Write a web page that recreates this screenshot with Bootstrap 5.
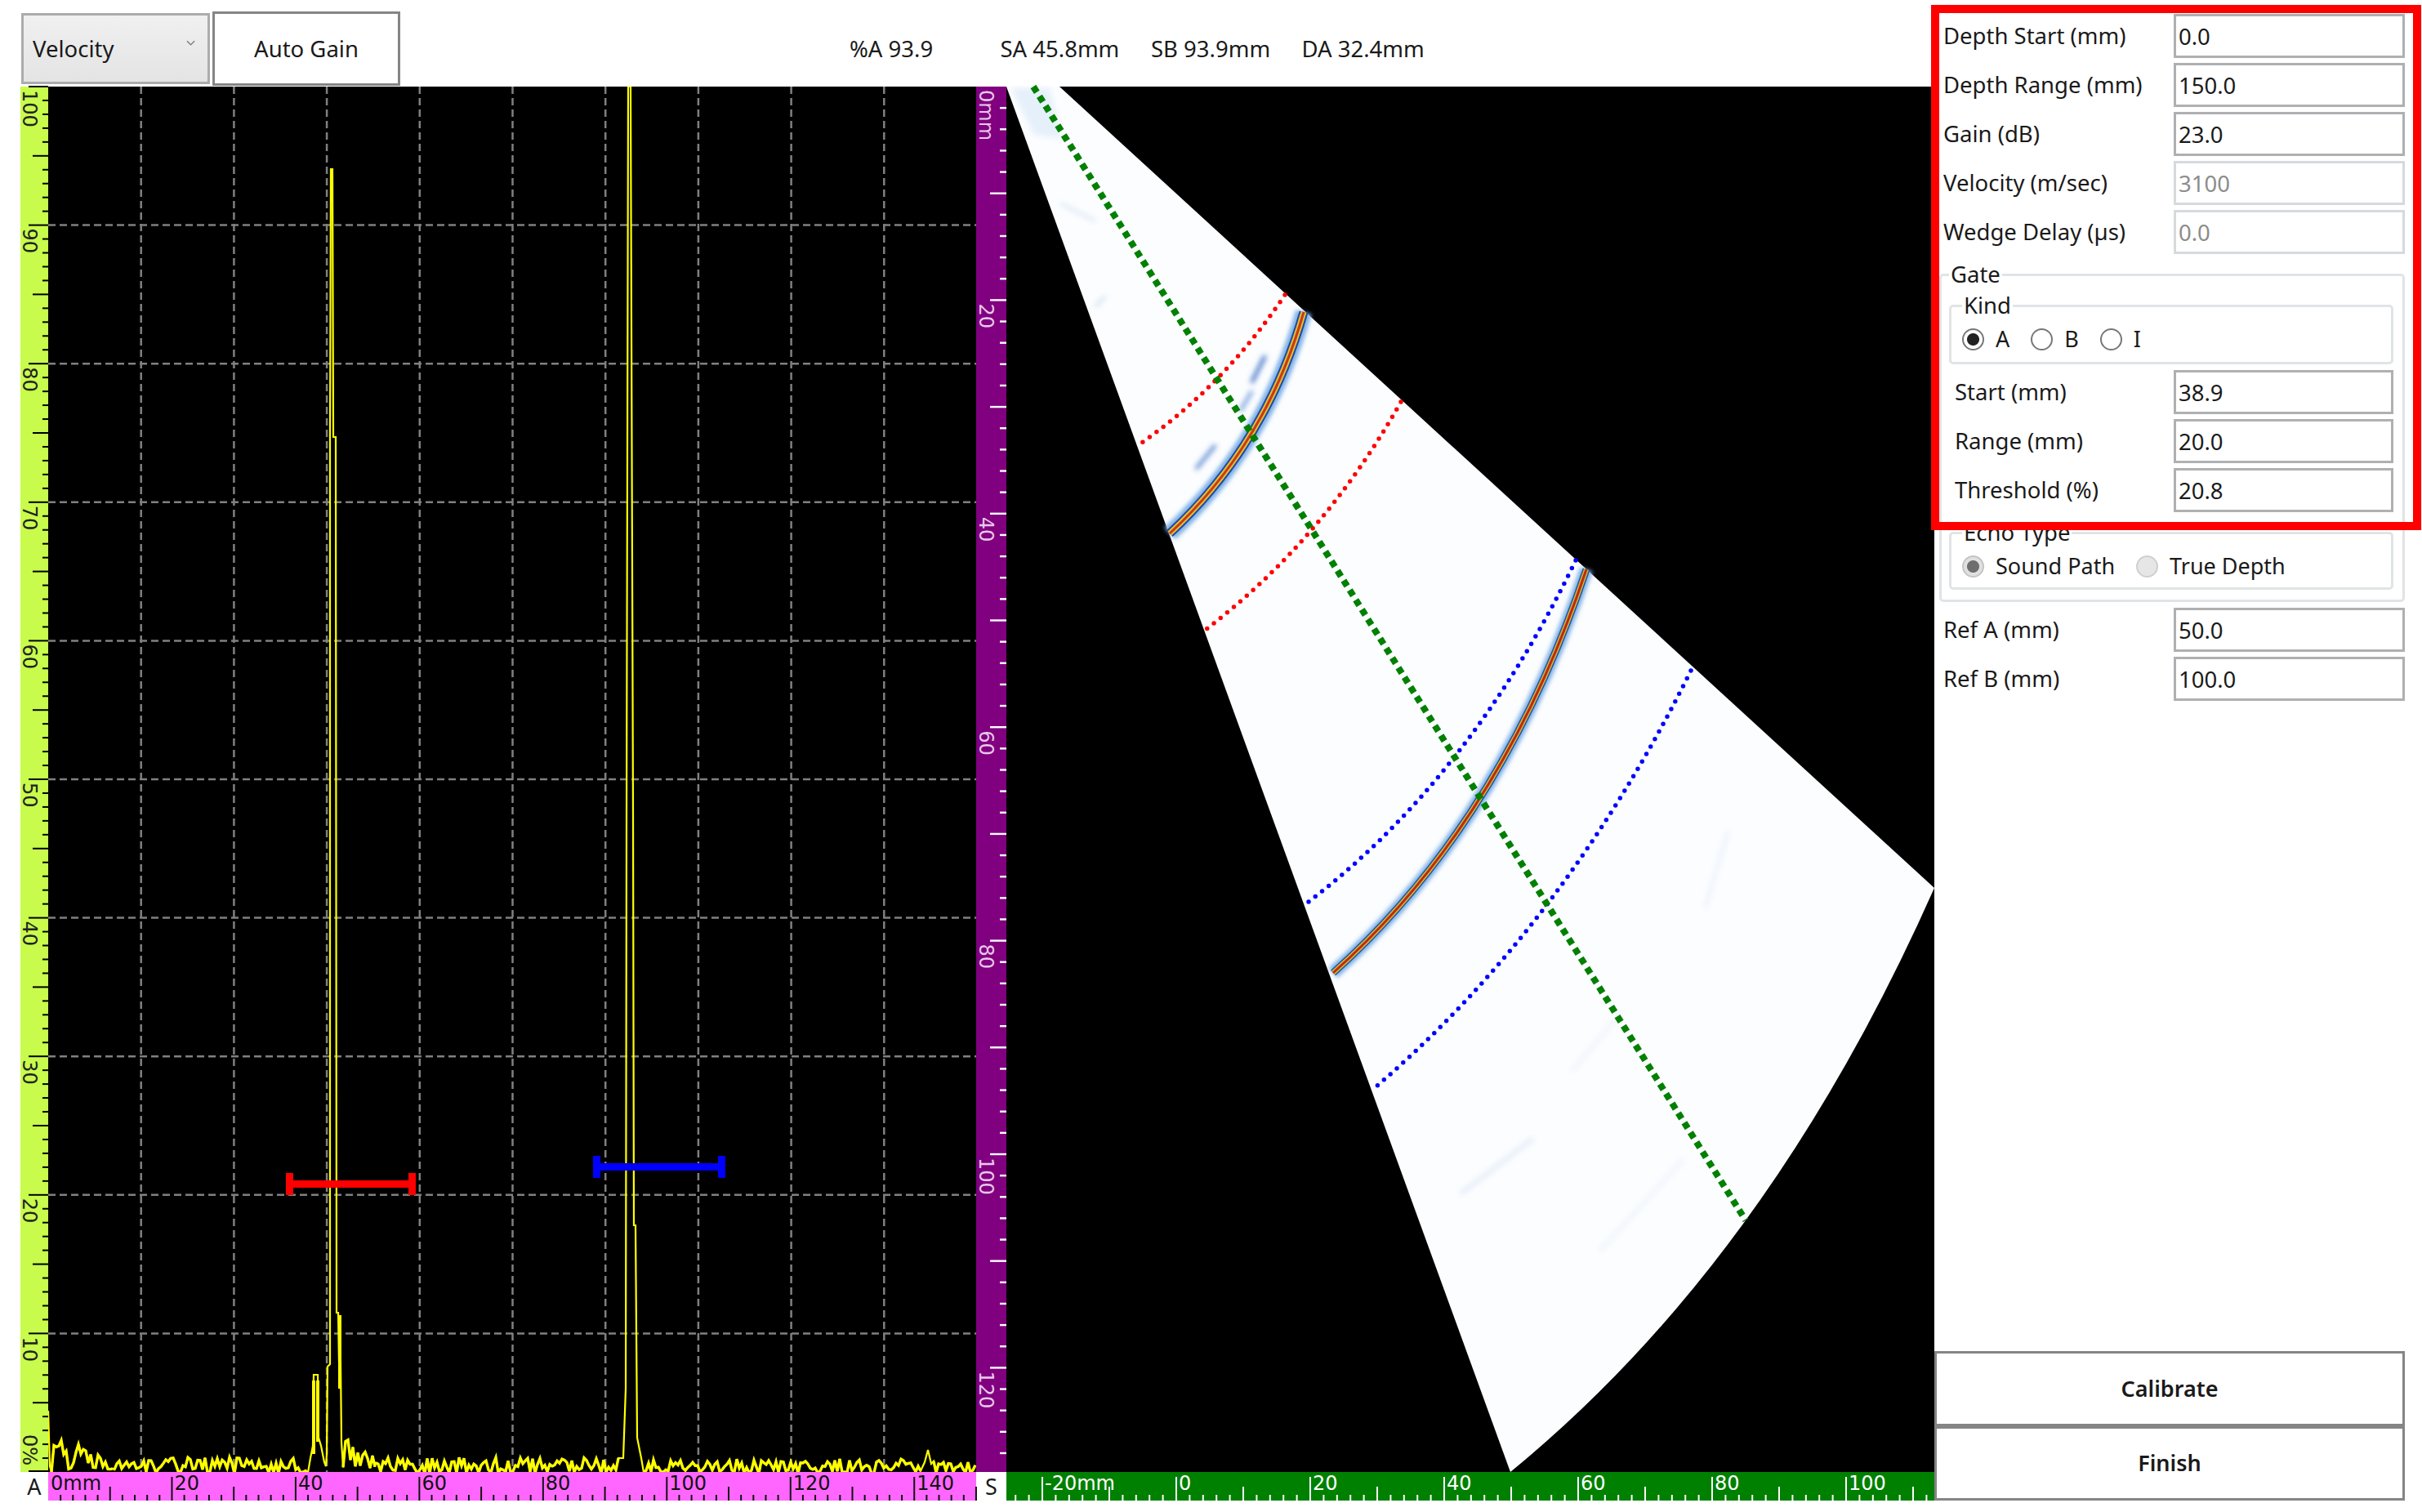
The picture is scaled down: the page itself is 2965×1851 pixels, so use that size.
<!DOCTYPE html>
<html lang="en">
<head>
    <meta charset="UTF-8">
    <title>Velocity Calibration</title>
    <link href="https://cdn.jsdelivr.net/npm/bootstrap@5.3.0/dist/css/bootstrap.min.css" rel="stylesheet">
    <style>
        body {
            background: #fff;
            color: #1a1a1a;
            font-family: "Noto Sans", "Liberation Sans", sans-serif;
            font-size: 27.5px;
            height: 1851px;
            overflow: hidden;
        }
        .app-left { width: 2368px; }
        .app-right {
            width: 597px;
            height: 1851px;
            padding: 17px 21px 14px 11px;
        }
        .top-row { height: 106px; padding: 13px 0 0 26px; }
        .mode-select {
            width: 231px;
            height: 87px;
            padding: 0 0 0 11px;
            font-size: 27.5px;
            color: #1a1a1a;
            border: 3px solid #acacac;
            border-radius: 0;
            background-color: #ececec;
            background-image: url("data:image/svg+xml,%3csvg xmlns='http://www.w3.org/2000/svg' viewBox='0 0 12 8'%3e%3cpath fill='none' stroke='%23808080' stroke-width='1.6' d='M1 1l5 5 5-5'/%3e%3c/svg%3e"), linear-gradient(#f0f0f0, #e4e4e4);
            background-repeat: no-repeat;
            background-position: right 15px top 30px, 0 0;
            background-size: 11px 8px, 100% 100%;
        }
        .plain-btn {
            background: #fff;
            border: 3px solid #858585;
            border-radius: 0;
            color: #1a1a1a;
            font-size: 27.5px;
            padding: 0;
        }
        .gain-btn { width: 230px; height: 91px; margin-left: 3px; }
        .readouts { margin-left: 550px; }
        .readout-item { width: 184.5px; white-space: nowrap; }
        .scope-grid {
            display: grid;
            grid-template-columns: 34px 1136px 37px 1136px;
            grid-template-rows: 1696px 35px;
            margin-left: 25px;
        }
        .scope-grid svg { display: block; overflow: visible; }
        .axis-letter {
            display: flex;
            align-items: center;
            justify-content: center;
            font-size: 27px;
            line-height: 1;
        }
        .axis-text { font-family: "DejaVu Sans", sans-serif; font-size: 24px; }
        .field-row { margin-bottom: 6px; }
        .field-label { width: 282px; flex-shrink: 0; white-space: nowrap; }
        .group-row .field-label { width: 275px; padding-left: 7px; }
        .field-input {
            height: 54px;
            border: 3px solid #aeb0b2;
            border-radius: 0;
            font-size: 27.5px;
            color: #1a1a1a;
            padding: 0 3px;
            min-height: 0;
        }
        .field-input:disabled {
            background: #fff;
            border-color: #d6dadd;
            color: #8c8c8c;
        }
        .group-box {
            border: 3px solid #e0e4e6;
            border-radius: 5px;
        }
        .group-title {
            font-size: 27.5px;
            line-height: 38px;
            margin: 0;
            padding: 0 2px;
        }
        .gate-box { margin: 6px 0 7px -5px; padding: 0 11px 12px 9px; }
        .kind-box { padding: 3px 13px 9px 13px; margin-bottom: 7px; }
        .echo-box { padding: 3px 13px 7px 13px; margin-top: 6px; }
        .radio-line { gap: 26px; height: 38px; font-size: 27px; }
        .radio-line label { white-space: nowrap; }
        .radio-item { gap: 14px; }
        .radio-dot.form-check-input {
            width: 27px;
            height: 27px;
            margin: 0;
            border: 2px solid #777;
            background-color: #fff;
            opacity: 1;
            box-shadow: none;
        }
        .radio-dot.form-check-input:checked[type=radio] {
            background-color: #fff;
            border-color: #777;
            background-image: radial-gradient(circle, #222 0 7px, #fff 8px);
        }
        .radio-dot.form-check-input:disabled { background-color: #e6e6e6; border-color: #cfcfcf; }
        .radio-dot.form-check-input:checked:disabled[type=radio] {
            border-color: #c4c4c4;
            background-image: radial-gradient(circle, #6e6e6e 0 7px, #e0e0e0 8px);
        }
        .action-btn {
            display: block;
            width: 576px;
            height: 92px;
            margin-left: -11px;
            font-size: 27px;
            font-weight: 600;
        }
        .action-btn + .action-btn { height: 91px; }
        .mark-box {
            position: absolute;
            left: 2364px;
            top: 6px;
            width: 600px;
            height: 643px;
            border: 10px solid #f00;
            pointer-events: none;
        }
    </style>
</head>
<body>

<div class="d-flex">
    <div class="app-left">
        <div class="top-row d-flex align-items-center position-relative">
            <select class="form-select mode-select"><option>Velocity</option></select>
            <button type="button" class="btn plain-btn gain-btn">Auto Gain</button>
            <div class="readouts d-flex">
                <span class="readout-item">%A 93.9</span>
                <span class="readout-item">SA 45.8mm</span>
                <span class="readout-item">SB 93.9mm</span>
                <span class="readout-item">DA 32.4mm</span>
            </div>
        </div>

        <div class="scope-grid">
            <svg id="ampRuler" width="34" height="1696" viewBox="25 106 34 1696"></svg>
            <svg id="ascan" width="1136" height="1696" viewBox="59 106 1136 1696"></svg>
            <svg id="depthRuler" width="37" height="1696" viewBox="1195 106 37 1696"></svg>
            <svg width="1136" height="1696" viewBox="1232 106 1136 1696">
                <defs>
                    <filter id="soft" x="-5%" y="-5%" width="110%" height="110%"><feGaussianBlur stdDeviation="0.7"/></filter>
                    <filter id="smear" x="-50%" y="-50%" width="200%" height="200%"><feGaussianBlur stdDeviation="3"/></filter>
                    <filter id="glow" x="-20%" y="-20%" width="140%" height="140%"><feGaussianBlur stdDeviation="2.5"/></filter>
                </defs>
                <rect x="1232" y="106" width="1136" height="1696" fill="#000"/>
                <g filter="url(#soft)">
                    <path d="M1232 106L1297 106L2368 1087Q2165.5 1543.5 1849 1802Z" fill="#fbfdff"/>
                    <!-- faint echoes -->
                    <g fill="none" stroke-linecap="round" filter="url(#smear)">
                        <path d="M1238 108L1285 108L1300 170L1266 165Z" fill="#e6f0fa" stroke="none"/>
                        <path d="M1340 270L1300 250" stroke="#e6eef8" stroke-width="5"/>
                        <path d="M1352 364L1342 374" stroke="#d5e2f1" stroke-width="4"/>
                        <path d="M1548 437L1533 467" stroke="#3d6fc4" stroke-width="4.5"/>
                        <path d="M1532 480L1519 502" stroke="#6d97d8" stroke-width="4"/>
                        <path d="M1487 546L1465 573" stroke="#4f7fcd" stroke-width="4"/>
                        <path d="M2115 1020L2088 1110" stroke="#eef3fa" stroke-width="5"/>
                        <path d="M1985 1240L1925 1310" stroke="#f0f4fa" stroke-width="5"/>
                        <path d="M1875 1395L1790 1460" stroke="#e9eff8" stroke-width="6"/>
                        <path d="M2060 1420L1960 1530" stroke="#f0f4fa" stroke-width="5"/>
                    </g>
                    <!-- strong echoes -->
                    <g fill="none">
                        <path d="M1596 382Q1550 543.7 1432 653" stroke="#7fb0e6" stroke-width="20" filter="url(#glow)"/>
                        <path d="M1596 382Q1550 543.7 1432 653" stroke="#1b49a6" stroke-width="11"/>
                        <path d="M1596 382Q1550 543.7 1432 653" stroke="#e5bf2c" stroke-width="7"/>
                        <path d="M1596 382Q1550 543.7 1432 653" stroke="#c8391f" stroke-width="3"/>
                        <path d="M1942 697Q1839 1006 1632 1191" stroke="#7fb0e6" stroke-width="16" filter="url(#glow)"/>
                        <path d="M1942 697Q1839 1006 1632 1191" stroke="#1b55a8" stroke-width="9"/>
                        <path d="M1942 697Q1839 1006 1632 1191" stroke="#dcb52c" stroke-width="6"/>
                        <path d="M1942 697Q1839 1006 1632 1191" stroke="#b82c18" stroke-width="3"/>
                    </g>
                    <!-- gate arcs -->
                    <g fill="none" stroke-linecap="round" stroke-dasharray="0 10.5" stroke-width="5.5">
                        <path d="M1573 361Q1497.5 473.7 1392 546" stroke="#f00"/>
                        <path d="M1715 492Q1619 662.25 1475 771.5" stroke="#f00"/>
                        <path d="M1929 686Q1798.5 955.5 1598 1107" stroke="#00f"/>
                        <path d="M2070 821Q1913.5 1136 1679 1335" stroke="#00f"/>
                    </g>
                    <path d="M1265 106L2137 1494" fill="none" stroke="#008000" stroke-width="8" stroke-dasharray="8 6"/>
                </g>
            </svg>

            <div class="axis-letter">A</div>
            <svg id="rangeRuler" width="1136" height="35" viewBox="59 1802 1136 35"></svg>
            <div class="axis-letter">S</div>
            <svg id="widthRuler" width="1136" height="35" viewBox="1232 1802 1136 35"></svg>
        </div>
    </div>

    <div class="app-right d-flex flex-column">
        <div class="field-row d-flex align-items-center"><label class="field-label">Depth Start (mm)</label><input class="form-control field-input" value="0.0"></div>
        <div class="field-row d-flex align-items-center"><label class="field-label">Depth Range (mm)</label><input class="form-control field-input" value="150.0"></div>
        <div class="field-row d-flex align-items-center"><label class="field-label">Gain (dB)</label><input class="form-control field-input" value="23.0"></div>
        <div class="field-row d-flex align-items-center"><label class="field-label">Velocity (m/sec)</label><input class="form-control field-input" value="3100" disabled></div>
        <div class="field-row d-flex align-items-center mb-0"><label class="field-label">Wedge Delay (µs)</label><input class="form-control field-input" value="0.0" disabled></div>

        <fieldset class="group-box gate-box">
            <legend class="group-title float-none w-auto">Gate</legend>
            <fieldset class="group-box kind-box">
                <legend class="group-title float-none w-auto">Kind</legend>
                <div class="radio-line d-flex align-items-center">
                    <div class="radio-item d-flex align-items-center"><input class="form-check-input radio-dot" type="radio" name="kind" checked><label>A</label></div>
                    <div class="radio-item d-flex align-items-center"><input class="form-check-input radio-dot" type="radio" name="kind"><label>B</label></div>
                    <div class="radio-item d-flex align-items-center"><input class="form-check-input radio-dot" type="radio" name="kind"><label>I</label></div>
                </div>
            </fieldset>
            <div class="group-row field-row d-flex align-items-center"><label class="field-label">Start (mm)</label><input class="form-control field-input" value="38.9"></div>
            <div class="group-row field-row d-flex align-items-center"><label class="field-label">Range (mm)</label><input class="form-control field-input" value="20.0"></div>
            <div class="group-row field-row d-flex align-items-center mb-0"><label class="field-label">Threshold (%)</label><input class="form-control field-input" value="20.8"></div>
            <fieldset class="group-box echo-box">
                <legend class="group-title float-none w-auto">Echo Type</legend>
                <div class="radio-line d-flex align-items-center">
                    <div class="radio-item d-flex align-items-center"><input class="form-check-input radio-dot" type="radio" name="echo" checked disabled><label>Sound Path</label></div>
                    <div class="radio-item d-flex align-items-center"><input class="form-check-input radio-dot" type="radio" name="echo" disabled><label>True Depth</label></div>
                </div>
            </fieldset>
        </fieldset>

        <div class="field-row d-flex align-items-center"><label class="field-label">Ref A (mm)</label><input class="form-control field-input" value="50.0"></div>
        <div class="field-row d-flex align-items-center mb-0"><label class="field-label">Ref B (mm)</label><input class="form-control field-input" value="100.0"></div>

        <div class="mt-auto">
            <button type="button" class="btn plain-btn action-btn">Calibrate</button>
            <button type="button" class="btn plain-btn action-btn">Finish</button>
        </div>
    </div>
</div>

<div class="mark-box"></div>

<script src="https://cdn.jsdelivr.net/npm/bootstrap@5.3.0/dist/js/bootstrap.bundle.min.js"></script>
<script>
    function line(x1, y1, x2, y2, color, w) {
        return '<line x1="' + x1 + '" y1="' + y1 + '" x2="' + x2 + '" y2="' + y2 + '" stroke="' + color + '" stroke-width="' + w + '"/>';
    }
    function hText(x, y, t, color) {
        return '<text class="axis-text" x="' + x + '" y="' + y + '" fill="' + color + '">' + t + '</text>';
    }
    function vText(x, y, t, color) {
        return '<text class="axis-text" transform="translate(' + x + ' ' + y + ') rotate(90)" fill="' + color + '">' + t + '</text>';
    }

    // amplitude ruler
    var s = '<rect x="25" y="106" width="34" height="1696" fill="#c8fb4c"/>';
    for (var i = 0; i <= 100; i += 1) {
        var y = 106 + i * 16.96;
        var len = i % 10 === 0 ? 24 : (i % 5 === 0 ? 19 : 7);
        s += line(59 - len, y + (i === 100 ? -1 : 0), 59, y + (i === 100 ? -1 : 0), '#000', 2);
    }
    for (var p = 100; p > 0; p -= 10) {
        s += vText(28, 106 + (100 - p) * 16.96 + 4, p, '#222');
    }
    s += vText(28, 1756, '0%', '#222');
    document.getElementById('ampRuler').innerHTML = s;

    // a-scan plot
    s = '<rect x="59" y="106" width="1136" height="1696" fill="#000"/>';
    for (i = 1; i < 10; i++) {
        var gx = 59 + i * 113.7;
        s += line(gx, 106, gx, 1802, '#808080', 2.5).replace('/>', ' stroke-dasharray="9 5"/>');
    }
    for (i = 1; i < 10; i++) {
        var gy = 106 + i * 169.6;
        s += line(59, gy, 1195, gy, '#808080', 2.5).replace('/>', ' stroke-dasharray="9 5"/>');
    }

    // noise trace, fixed seed so the picture never changes
    var seed = 4711;
    function rnd() { seed = (seed * 16807) % 2147483647; return seed / 2147483647; }
    function noise(fromX, toX, amp) {
        var pts = [];
        for (var x = fromX; x < toX; x += 3) {
            var a = typeof amp === 'function' ? amp(x) : amp;
            pts.push(x + ',' + (1804 - rnd() * a).toFixed(1));
        }
        return pts;
    }
    function poly(pts, w) {
        return '<polyline points="' + pts.join(' ') + '" fill="none" stroke="#ffff00" stroke-width="' + w + '"/>';
    }
    var n1 = noise(63, 140, function (x) { return 16 + 38 * (140 - x) / 80; });
    var n2 = noise(140, 380, 20);
    var n3 = noise(420, 460, function (x) { return 18 + 40 * (460 - x) / 40; });
    var n4 = noise(460, 758, 20);
    var n5 = noise(788, 1130, 18);
    var n6 = noise(1143, 1195, 16);
    var trace = ['59,1727', '61,1795'].concat(n1, n2,
        ['380,1785', '383,1770', '384,1683', '389,1683', '390,1760', '393,1770', '397,1790', '399,1795', '400,1780', '401,1673', '404,1670', '404,535', '405,207', '407,207', '408,535', '411,535', '412,1607', '414,1607', '415,1667', '417,1667', '418,1765'],
        n3, n4,
        ['760,1785', '763,1785', '766,1700', '767,1000', '769,106', '772,106', '775,1000', '776,1500', '778,1500', '780,1760', '785,1785'],
        n5, ['1132,1790', '1136,1775', '1140,1792'], n6);
    s += poly(trace, 2.2);
    // the grass along the base reads heavier than the thin peaks
    [n1, n2, n3, n4, n5, n6].forEach(function (n) { s += poly(n, 3.4); });
    s += poly(['384,1690', '384,1780'], 4) + poly(['389,1690', '389,1765'], 4) + poly(['416,1610', '416,1700'], 4);

    // gate bars
    s += '<path d="M350 1436h9v9h141v-9h9v27h-9v-9h-141v9h-9z" fill="#f00"/>';
    s += '<path d="M726 1415h9v9h144v-9h9v27h-9v-9h-144v9h-9z" fill="#00f"/>';
    s = '<defs><clipPath id="plotClip"><rect x="59" y="106" width="1136" height="1696"/></clipPath></defs><g clip-path="url(#plotClip)">' + s + '</g>';
    document.getElementById('ascan').innerHTML = s;

    // depth ruler
    s = '<rect x="1195" y="106" width="37" height="1696" fill="#800080"/>';
    for (i = 1; i <= 64; i++) {
        var dy = 106 + i * 26.14;
        if (dy > 1795) break;
        s += line(1232 - (i % 5 === 0 ? 20 : 8), dy, 1232, dy, '#fff', 2.4);
    }
    s += vText(1199, 110, '0mm', '#e8c8e8');
    for (var d = 20; d <= 120; d += 20) {
        s += vText(1199, 106 + d * 13.07 + 4, d, '#e8c8e8');
    }
    document.getElementById('depthRuler').innerHTML = s;

    // horizontal rulers
    function hRuler(left, right, zero, perMm, bg, ink, unitAt) {
        var out = '<rect x="' + left + '" y="1802" width="' + (right - left) + '" height="35" fill="' + bg + '"/>';
        var start = Math.ceil((left - zero) / perMm / 2) * 2;
        for (var mm = start; zero + mm * perMm < right; mm += 2) {
            var x = zero + mm * perMm;
            var h = mm % 20 === 0 ? 29 : (mm % 10 === 0 ? 17 : 7);
            if (x > left) out += line(x, 1837 - h, x, 1837, ink, 2);
            if (mm % 20 === 0) {
                out += hText(x + 3, 1824, mm + (mm === unitAt ? 'mm' : ''), ink);
            }
        }
        return out;
    }
    document.getElementById('rangeRuler').innerHTML = hRuler(59, 1195, 59, 7.573, '#ff66ff', '#111', 0);
    document.getElementById('widthRuler').innerHTML = hRuler(1232, 2368, 1440, 8.2, '#008000', '#fff', -20);
</script>
</body>
</html>
